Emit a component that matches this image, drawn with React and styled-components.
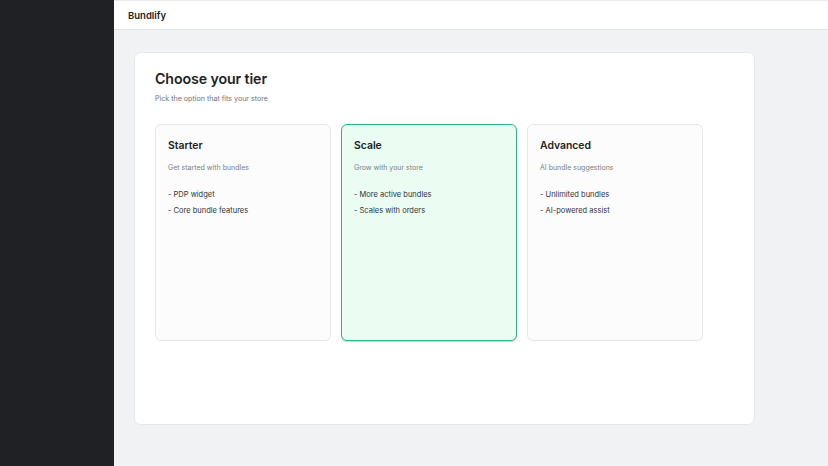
import React from "react";
import styled, { createGlobalStyle } from "styled-components";

const Global = createGlobalStyle`
  html, body { margin: 0; padding: 0; }
  body {
    font-family: Inter, "Noto Sans", "Liberation Sans", sans-serif;
    background: #f1f2f4;
    color: #202223;
    -webkit-font-smoothing: antialiased;
  }
`;

const Shell = styled.div`
  display: flex;
  width: 828px;
  height: 466px;
  overflow: hidden;
`;

const Sidebar = styled.aside`
  width: 114px;
  flex: none;
  background: #202124;
`;

const Main = styled.div`
  flex: 1;
  display: flex;
  flex-direction: column;
  background: #f1f2f4;
`;

const TopBar = styled.header`
  height: 28px;
  flex: none;
  display: flex;
  align-items: center;
  padding-left: 14px;
  background: #ffffff;
  border-top: 1px solid #ebebeb;
  border-bottom: 1px solid #e3e4e6;
  font-size: 9.5px;
  font-weight: 600;
  color: #202223;
`;

const Content = styled.main`
  padding: 22px 73px 0 20px;
`;

const Panel = styled.section`
  box-sizing: border-box;
  height: 373px;
  background: #ffffff;
  border: 1px solid #e6e7e9;
  border-radius: 7px;
  padding: 17px 20px;
`;

const Title = styled.h1`
  margin: 0;
  font-size: 14.2px;
  font-weight: 600;
  line-height: 18px;
  letter-spacing: -0.1px;
`;

const Subtitle = styled.p`
  margin: 5px 0 0;
  font-size: 7.1px;
  line-height: 12px;
  color: #707377;
`;

const Tiers = styled.div`
  display: grid;
  grid-template-columns: repeat(3, 176px);
  gap: 10px;
  margin-top: 19px;
`;

const Tier = styled.div`
  box-sizing: border-box;
  height: 217px;
  border-radius: 6px;
  padding: 13px 12px;
  border: 1px solid ${(p) => (p.$selected ? "#2fb583" : "#e6e7e9")};
  background: ${(p) => (p.$selected ? "#ebfcf3" : "#fcfcfc")};
  box-shadow: ${(p) => (p.$selected ? "0 1px 0 #cfd8d4" : "none")};
`;

const TierName = styled.h2`
  margin: 0;
  font-size: 10.4px;
  font-weight: 600;
  line-height: 16px;
`;

const TierDesc = styled.p`
  margin: 8px 0 0;
  font-size: 7px;
  line-height: 12px;
  color: #7b7f83;
`;

const Features = styled.ul`
  list-style: none;
  margin: 15px 0 0;
  padding: 0;
  display: flex;
  flex-direction: column;
  gap: 4px;
`;

const Feature = styled.li`
  font-size: 7.5px;
  line-height: 12px;
  color: #303236;
`;

const tiers = [
  { name: "Starter", desc: "Get started with bundles", features: ["PDP widget", "Core bundle features"] },
  { name: "Scale", desc: "Grow with your store", features: ["More active bundles", "Scales with orders"], selected: true },
  { name: "Advanced", desc: "AI bundle suggestions", features: ["Unlimited bundles", "AI-powered assist"] },
];

export default function App() {
  return (
    <>
      <Global />
      <Shell>
        <Sidebar />
        <Main>
          <TopBar>Bundlify</TopBar>
          <Content>
            <Panel>
              <Title>Choose your tier</Title>
              <Subtitle>Pick the option that fits your store</Subtitle>
              <Tiers>
                {tiers.map((t) => (
                  <Tier key={t.name} $selected={t.selected}>
                    <TierName>{t.name}</TierName>
                    <TierDesc>{t.desc}</TierDesc>
                    <Features>
                      {t.features.map((f) => (
                        <Feature key={f}>- {f}</Feature>
                      ))}
                    </Features>
                  </Tier>
                ))}
              </Tiers>
            </Panel>
          </Content>
        </Main>
      </Shell>
    </>
  );
}
